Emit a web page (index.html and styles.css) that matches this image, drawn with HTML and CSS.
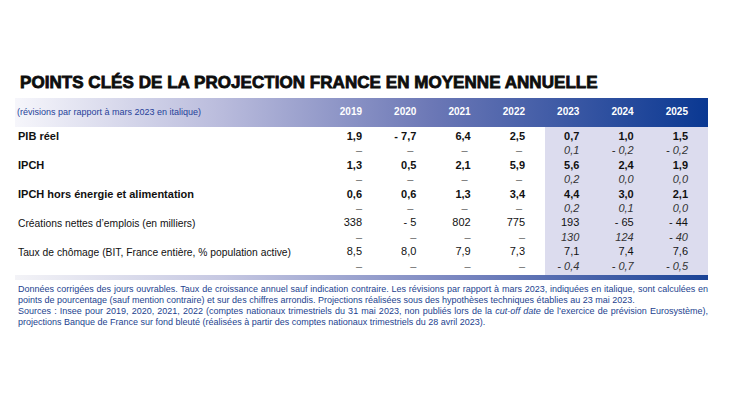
FILE: index.html
```html
<!DOCTYPE html>
<html lang="fr">
<head>
<meta charset="utf-8">
<title>Points clés de la projection France</title>
<link rel="stylesheet" href="styles.css">
</head>
<body>
<div class="page">
  <h1 class="title">POINTS CLÉS DE LA PROJECTION FRANCE EN MOYENNE ANNUELLE</h1>
  <div class="tbl">
    <div class="row head">
      <div class="lbl sub">(révisions par rapport à mars 2023 en italique)</div>
      <div class="c">2019</div><div class="c">2020</div><div class="c">2021</div><div class="c">2022</div><div class="c">2023</div><div class="c">2024</div><div class="c">2025</div>
    </div>
    <div class="row b first">
      <div class="lbl">PIB réel</div>
      <div class="c">1,9</div><div class="c">- 7,7</div><div class="c">6,4</div><div class="c">2,5</div><div class="c p">0,7</div><div class="c p">1,0</div><div class="c p">1,5</div>
    </div>
    <div class="row rev up">
      <div class="lbl"></div>
      <div class="c d">–</div><div class="c d">–</div><div class="c d">–</div><div class="c d">–</div><div class="c p">0,1</div><div class="c p">- 0,2</div><div class="c p">- 0,2</div>
    </div>
    <div class="row b">
      <div class="lbl">IPCH</div>
      <div class="c">1,3</div><div class="c">0,5</div><div class="c">2,1</div><div class="c">5,9</div><div class="c p">5,6</div><div class="c p">2,4</div><div class="c p">1,9</div>
    </div>
    <div class="row rev up">
      <div class="lbl"></div>
      <div class="c d">–</div><div class="c d">–</div><div class="c d">–</div><div class="c d">–</div><div class="c p">0,2</div><div class="c p">0,0</div><div class="c p">0,0</div>
    </div>
    <div class="row b">
      <div class="lbl">IPCH hors énergie et alimentation</div>
      <div class="c">0,6</div><div class="c">0,6</div><div class="c">1,3</div><div class="c">3,4</div><div class="c p">4,4</div><div class="c p">3,0</div><div class="c p">2,1</div>
    </div>
    <div class="row rev up">
      <div class="lbl"></div>
      <div class="c d">–</div><div class="c d">–</div><div class="c d">–</div><div class="c d">–</div><div class="c p">0,2</div><div class="c p">0,1</div><div class="c p">0,0</div>
    </div>
    <div class="row std">
      <div class="lbl">Créations nettes d’emplois (en milliers)</div>
      <div class="c">338</div><div class="c">- 5</div><div class="c">802</div><div class="c">775</div><div class="c p">193</div><div class="c p">- 65</div><div class="c p">- 44</div>
    </div>
    <div class="row rev">
      <div class="lbl"></div>
      <div class="c d">–</div><div class="c d">–</div><div class="c d">–</div><div class="c d">–</div><div class="c p">130</div><div class="c p">124</div><div class="c p">- 40</div>
    </div>
    <div class="row std">
      <div class="lbl">Taux de chômage (BIT, France entière, % population active)</div>
      <div class="c">8,5</div><div class="c">8,0</div><div class="c">7,9</div><div class="c">7,3</div><div class="c p">7,1</div><div class="c p">7,4</div><div class="c p">7,6</div>
    </div>
    <div class="row rev last">
      <div class="lbl"></div>
      <div class="c d">–</div><div class="c d">–</div><div class="c d">–</div><div class="c d">–</div><div class="c p">- 0,4</div><div class="c p">- 0,7</div><div class="c p">- 0,5</div>
    </div>
    <div class="bar"></div>
  </div>
  <div class="notes">
    <p>Données corrigées des jours ouvrables. Taux de croissance annuel sauf indication contraire. Les révisions par rapport à mars 2023, indiquées en italique, sont calculées en points de pourcentage (sauf mention contraire) et sur des chiffres arrondis. Projections réalisées sous des hypothèses techniques établies au 23 mai 2023.</p>
    <p>Sources : Insee pour 2019, 2020, 2021, 2022 (comptes nationaux trimestriels du 31 mai 2023, non publiés lors de la <i>cut-off date</i> de l’exercice de prévision Eurosystème), projections Banque de France sur fond bleuté (réalisées à partir des comptes nationaux trimestriels du 28 avril 2023).</p>
  </div>
</div>
</body>
</html>
```

FILE: styles.css
```css
* { box-sizing: border-box; }
html, body { margin: 0; padding: 0; background: #ffffff; }
body { font-family: "Liberation Sans", Arial, sans-serif; color: #111; }

.page {
  width: 730px;
  padding: 73px 0 0 15px;
}

.title {
  margin: 0 0 5px 5px;
  font-size: 17px;
  line-height: 20px;
  font-weight: 700;
  color: #0d0d0d;
  letter-spacing: 0.05px;
  -webkit-text-stroke: 0.8px #0d0d0d;
  white-space: nowrap;
}

.tbl { width: 693px; }

.row {
  display: grid;
  grid-template-columns: 1fr repeat(7, 54.33px);
  font-size: 11px;
  line-height: 14.4px;
}

.row .lbl { padding-left: 3px; white-space: nowrap; font-size: 10.3px; }
.std .lbl { height: 14.4px; line-height: 17px; }
.b .lbl { font-size: 11px; }
.row .c { text-align: right; padding-right: 20px; white-space: nowrap; }
.row .c.p { background: #dcdcee; }
.row .c.d { color: #666; }
.up .c.d { padding-right: 23px; }
.up .c.d:nth-child(2) { padding-right: 20px; }

.head {
  height: 29px;
  align-items: center;
  background: linear-gradient(to right, #f6f6fb 0%, #b9bbdc 30%, #6c78b6 60%, #0a3892 100%);
}
.head .c { color: #fff; font-weight: 700; font-size: 10px; }
.head .sub { color: #263f9a; font-size: 9px; padding-left: 2px; }

.b .lbl, .b .c { font-weight: 700; }
.rev .c.p { font-style: italic; color: #333; }

.first > div { padding-top: 2px; }
.last > div { padding-bottom: 2px; }

.bar {
  height: 5px;
  background: linear-gradient(to right, #f3f3f7 0%, #c6c8e2 30%, #7784bf 65%, #1a4396 100%);
}

.notes {
  width: 693px;
  padding: 4px 0 0 3px;
  color: #233f8f;
  font-size: 9px;
  line-height: 11px;
}
.notes p { margin: 0; text-align: justify; }
```
